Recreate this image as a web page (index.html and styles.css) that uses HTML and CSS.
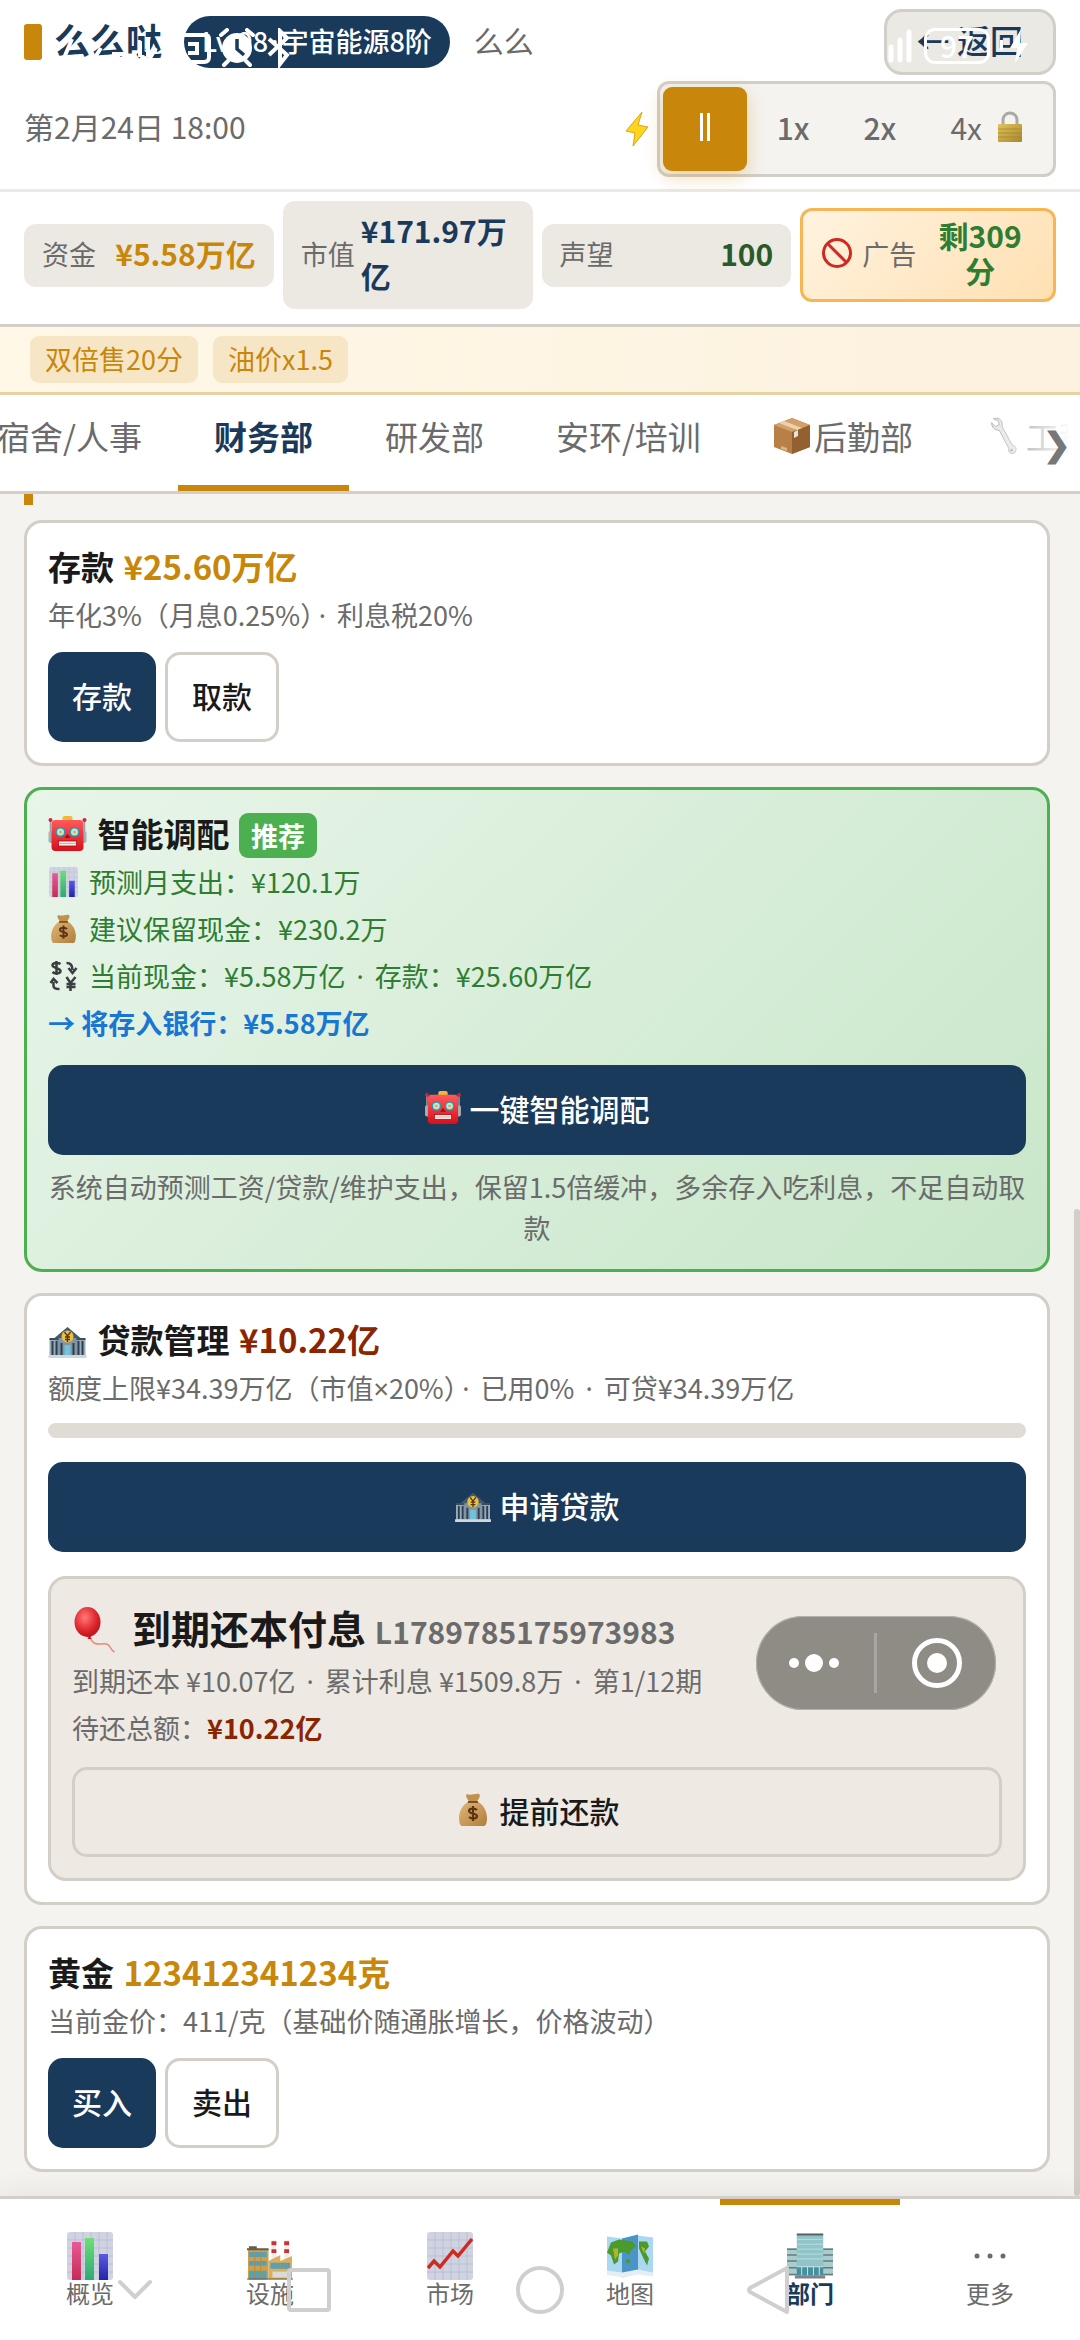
FILE: index.html
```html
<!DOCTYPE html>
<html lang="zh-CN">
<head>
<meta charset="utf-8">
<meta name="viewport" content="width=device-width, initial-scale=1">
<title>财务部</title>
<link rel="stylesheet" href="styles.css">
</head>
<body>
<svg class="sprite" aria-hidden="true">
  <defs>
    <linearGradient id="g-red" x1="0" y1="0" x2="0" y2="1"><stop offset="0" stop-color="#ff5a5a"/><stop offset="1" stop-color="#d90f1c"/></linearGradient>
    <linearGradient id="g-gold" x1="0" y1="0" x2="1" y2="1"><stop offset="0" stop-color="#e0c45a"/><stop offset="1" stop-color="#a8862c"/></linearGradient>
    <linearGradient id="g-bag" x1="0" y1="0" x2="1" y2="1"><stop offset="0" stop-color="#e3b878"/><stop offset="1" stop-color="#b07d3c"/></linearGradient>
    <linearGradient id="g-pink" x1="0" y1="0" x2="0" y2="1"><stop offset="0" stop-color="#e85a96"/><stop offset="1" stop-color="#c72a55"/></linearGradient>
    <linearGradient id="g-green" x1="0" y1="0" x2="0" y2="1"><stop offset="0" stop-color="#6de070"/><stop offset="1" stop-color="#2fa878"/></linearGradient>
    <linearGradient id="g-blue" x1="0" y1="0" x2="0" y2="1"><stop offset="0" stop-color="#5a5ae6"/><stop offset="1" stop-color="#2424a8"/></linearGradient>
    <radialGradient id="g-balloon" cx=".4" cy=".35" r=".7"><stop offset="0" stop-color="#ff7a78"/><stop offset=".6" stop-color="#e02a30"/><stop offset="1" stop-color="#b80f1a"/></radialGradient>
  </defs>
  <symbol id="i-bolt" viewBox="0 0 24 36"><path d="M17 1 1 20l9 2-2 13 15-19-10-2z" fill="#fdd41f" stroke="#d9a80c" stroke-width="1"/></symbol>
  <symbol id="i-lock" viewBox="0 0 26 32"><path d="M6 14V9a7 7 0 0 1 14 0v5" fill="none" stroke="#a9aaa8" stroke-width="3"/><rect x="1" y="13" width="24" height="18" rx="1" fill="url(#g-gold)"/><path d="M1 18h24M1 22h24M1 26h24" stroke="#9c7d28" stroke-width=".6"/></symbol>
  <symbol id="i-ban" viewBox="0 0 32 32"><g fill="none" stroke="#cf2a22" stroke-width="3"><circle cx="16" cy="16" r="13.5"/><path d="m6.5 6.500 19 19"/></g></symbol>
  <symbol id="i-box" viewBox="0 0 38 38"><path d="m19 1 18 7v22l-18 7-18-7V8z" fill="#b87f47"/><path d="m1 8 18 7 18-7-18-7z" fill="#d3a06a"/><path d="M19 15v22l18-7V8z" fill="#94602f"/><path d="m6 6 18 7 5-2-18-7z" fill="#ead2ae"/><path d="M21 15v6l4-2v-6z" fill="#e8e4dc"/><path d="m8 29 6 2v3l-6-2z" fill="#d9b58a"/></symbol>
  <symbol id="i-wrench" viewBox="0 0 28 40"><path d="M3 2c4-2 9 0 9 5 0 2 0 3 1 5l10 18c4 0 5 5 2 8-4 2-7-1-6-5L9 14C4 14 1 11 1 6l4 4 4-2-1-4z" fill="#dcdee1" stroke="#94979c" stroke-width="1"/><circle cx="22" cy="35" r="1.500" fill="#8e9196"/></symbol>
  <symbol id="i-robot" viewBox="0 0 38 36"><path d="M2 5v14M36 5v14" stroke="#9aa0a6" stroke-width="1.500"/><circle cx="2" cy="4" r="2" fill="#d9222e"/><circle cx="36" cy="4" r="2" fill="#d9222e"/><rect x="14" y="0" width="10" height="6" rx="2" fill="#f0b83a"/><rect x="0" y="15" width="5" height="12" rx="2" fill="#a8b0b8"/><rect x="33" y="15" width="5" height="12" rx="2" fill="#a8b0b8"/><rect x="3" y="4" width="32" height="31" rx="4" fill="url(#g-red)"/><circle cx="12" cy="16" r="5" fill="#2f95b4"/><circle cx="26" cy="16" r="5" fill="#2f95b4"/><circle cx="12" cy="16" r="3.500" fill="#b8ecd8"/><circle cx="26" cy="16" r="3.500" fill="#b8ecd8"/><circle cx="12" cy="16" r="1.500" fill="#e8b020"/><circle cx="26" cy="16" r="1.500" fill="#e8b020"/><path d="m19 18 3 4h-6z" fill="#a30d12"/><rect x="10" y="25" width="18" height="5" fill="#f6eee8" stroke="#a30d12" stroke-width=".8"/><path d="M10 27.500h18" stroke="#b08a88" stroke-width=".6"/></symbol>
  <symbol id="i-chart" viewBox="0 0 46 48"><rect width="46" height="48" rx="3" fill="#cfd3e2"/><path d="M0 8h46M0 16h46M0 24h46M0 32h46M0 40h46M8 0v48M16 0v48M24 0v48M32 0v48M40 0v48" stroke="#b6bcd0" stroke-width=".8"/><path d="M5 10h9v38H5z" fill="url(#g-pink)"/><path d="M18 6h9v42h-9z" fill="url(#g-green)"/><path d="M32 22h9v26h-9z" fill="url(#g-blue)"/></symbol>
  <symbol id="i-trend" viewBox="0 0 46 48"><rect width="46" height="48" rx="3" fill="#cfd3e2"/><path d="M0 8h46M0 16h46M0 24h46M0 32h46M0 40h46M8 0v48M16 0v48M24 0v48M32 0v48M40 0v48" stroke="#b6bcd0" stroke-width=".8"/><path d="m1 36 6-7 6 6 13-16 5 5L45 7" fill="none" stroke="#cf2a20" stroke-width="3.500"/></symbol>
  <symbol id="i-bag" viewBox="0 0 30 34"><path d="M9 1c3 2 9-1 12 0 2 1 0 5-2 7h-8C9 6 7 2 9 1z" fill="#c3904e"/><path d="M11 8h8c7 4 10 11 10 17 0 4-1 8-3 8H4c-2 0-3-4-3-8C1 19 4 12 11 8z" fill="url(#g-bag)"/><path d="M10 9h10" stroke="#7c5020" stroke-width="2"/><path d="M19 17c-2-2-8-2-8 1s8 2 8 5-6 3-8 1M15 13v15" fill="none" stroke="#5c3414" stroke-width="2.200"/></symbol>
  <symbol id="i-exchange" viewBox="0 0 26 30"><g fill="none" stroke="#3b3d42" stroke-width="2.500"><path d="M10 3C7 1 2 2 2 4.500S10 7 10 10s-6 3-8 1M6 0v14M16 2c5 0 6 3 6 7M18 7l4 5 4-5M3 21v4c0 2 2 3 6 3M0 22l3-4 4 4M16 16l4 6 5-6M20 22v8M16 23h9M16 26h9"/></g></symbol>
  <symbol id="i-bank" viewBox="0 0 38 36"><g transform="translate(0 5)"><path d="M1 12h9v17H1zM28 12h9v17h-9z" fill="#9aabb8"/><path d="m6 11 13-11 13 11z" fill="#45596b"/><path d="M8 11h22v18H8z" fill="#8195a4"/><path d="M1 12h9M28 12h9" stroke="#3b4d60" stroke-width="2"/><path d="M4 14v14M8 14v14M13 16v12M25 16v12M30 14v14M34 14v14" stroke="#2c3e50" stroke-width="2"/><path d="M16 18h6v11h-6z" fill="#6fc3da"/><circle cx="19" cy="9.500" r="6" fill="#f0c03c"/><path d="m16 5 3 4 3-4M19 9v6M16.500 10h5M16.500 12.500h5" fill="none" stroke="#493510" stroke-width="1.300"/><path d="M0 28h38v3H0z" fill="#cfd6dc"/></g></symbol>
  <symbol id="i-balloon" viewBox="0 0 42 46"><path d="M17 31c3 9 10 5 16 6 5 2 3 5 8 8" fill="none" stroke="#e88a78" stroke-width="1.500"/><ellipse cx="14" cy="15" rx="13" ry="15" fill="url(#g-balloon)"/><path d="m6 26 10 2 6-3-5 5 1 2h-4l1-2z" fill="#c9151f"/></symbol>
  <symbol id="i-factory" viewBox="0 0 47 48"><g transform="translate(0 8)"><path d="M25 0h5v20h-5zM38 0h5v20h-5z" fill="#f1ece4"/><path d="M25 1h5v4h-5zM25 9h5v4h-5zM38 1h5v4h-5zM38 9h5v4h-5z" fill="#c23438"/><path d="M22 21l12-6v6l12-5v24H22z" fill="#dcae5c"/><path d="M1 9h21v31H1z" fill="#cf9f4c"/><path d="M0 8h22v2H0zM2 6h8v2H2z" fill="#6b5b48"/><path d="M2 12h18v5H2zM2 21h18v5H2zM2 31h18v9H2zM24 23h20v6H24z" fill="#4fa3bd"/><path d="M8 12v28M14 12v28M29 23v6M34 23v6M39 23v6" stroke="#b98a3c" stroke-width="1"/><path d="M26 32h18v6H26z" fill="#dcdad6"/><path d="M0 39h47v1H0z" fill="#77603c"/></g></symbol>
  <symbol id="i-map" viewBox="0 0 46 43"><path d="m0 2 15 2 16-3 15 2v38l-15-2-16 3-15-2z" fill="#a9d8f0"/><path d="m15 4 16-4v39l-16 4z" fill="#4a94c8"/><path d="M0 36l15 2 16-3 15 3v4l-15-2-16 3-15-3z" fill="#e5eef0"/><path d="M4 8 12 5l14 2 3 5-4 3-3 5-5-3-5 2-1 8-4 3-3-9-4-3zM32 7l8 0 2 5-4 5 4 7-2 7-4-8-4-9zM19 25l4 0 0 4-4-1z" fill="#4a9a2e"/><path d="M6 14h5v7l-3 4zM34 12l4 2-1 5z" fill="#b4b428"/></symbol>
  <symbol id="i-office" viewBox="0 0 47 46"><path d="M0 15h47v28H0z" fill="#a9cccd"/><path d="M0 16h47M0 22h47M0 28h47M0 35h47M0 42h47" stroke="#68797e" stroke-width="1.500"/><path d="M10 1h27v33H10z" fill="#90c4c8"/><path d="M10 6h27M10 11h27M10 16h27M10 21h27M10 26h27" stroke="#b9dede"/><path d="M10 1h27" stroke="#555f64" stroke-width="2"/><path d="M10 34h27v9H10z" fill="#478f9c"/><path d="M15 34v9M21 34v9M27 34v9M33 34v9M10 34h27" stroke="#cfe3e4"/><path d="M8 43h31v3H8z" fill="#7d838c"/></symbol>
  <symbol id="i-dots" viewBox="0 0 46 46"><g fill="#6b6b6b"><circle cx="10" cy="23" r="2.500"/><circle cx="23" cy="23" r="2.500"/><circle cx="36" cy="23" r="2.500"/></g></symbol>
</svg>

<header class="header">
  <div class="brand-row">
    <span class="brand-mark"></span>
    <h1 class="brand-name">么么哒</h1>
    <span class="level">Lv.98<span class="sep">·</span>宇宙能源8阶</span>
    <span class="owner">么么</span>
    <button class="back" type="button">← 返回</button>
  </div>
  <div class="time-row">
    <time class="date">第2月24日 18:00</time>
    <svg class="bolt"><use href="#i-bolt"/></svg>
    <div class="speeds">
      <button class="speed speed-on" type="button" aria-label="暂停"><span class="pause"></span></button>
      <button class="speed" type="button">1x</button>
      <button class="speed" type="button">2x</button>
      <button class="speed speed-thin" type="button">4x <svg class="lock"><use href="#i-lock"/></svg></button>
    </div>
  </div>
</header>

<section class="stats">
  <div class="stat"><span class="stat-label">资金</span><b class="stat-value gold">¥5.58万亿</b></div>
  <div class="stat"><span class="stat-label">市值</span><b class="stat-value navy">¥171.97万亿</b></div>
  <div class="stat"><span class="stat-label">声望</span><b class="stat-value forest">100</b></div>
  <div class="stat stat-ad"><svg class="ban"><use href="#i-ban"/></svg><span class="stat-label">广告</span><b class="ad-value">剩309分</b></div>
</section>

<div class="buffs"><span class="buff">双倍售20分</span><span class="buff">油价x1.5</span></div>

<nav class="tabs">
  <div class="tab-track">
    <button class="tab" type="button">宿舍/人事</button>
    <button class="tab tab-on" type="button">财务部</button>
    <button class="tab" type="button">研发部</button>
    <button class="tab" type="button">安环/培训</button>
    <button class="tab" type="button"><svg class="tab-icon"><use href="#i-box"/></svg>后勤部</button>
    <button class="tab" type="button"><svg class="tab-icon"><use href="#i-wrench"/></svg>工程部</button>
  </div>
  <span class="tab-more">❯</span>
</nav>

<main class="content">
  <div class="section-bar"></div>

  <section class="card">
    <h2 class="title">存款 <span class="gold">¥25.60万亿</span></h2>
    <p class="line">年化3%（月息0.25%）<span class="sep">·</span> 利息税20%</p>
    <div class="actions">
      <button class="btn btn-main" type="button">存款</button>
      <button class="btn" type="button">取款</button>
    </div>
  </section>

  <section class="card card-green">
    <h2 class="title"><svg class="ico-title"><use href="#i-robot"/></svg> 智能调配 <span class="tag">推荐</span></h2>
    <ul class="facts">
      <li><svg class="ico"><use href="#i-chart"/></svg>预测月支出：¥120.1万</li>
      <li><svg class="ico"><use href="#i-bag"/></svg>建议保留现金：¥230.2万</li>
      <li><svg class="ico"><use href="#i-exchange"/></svg><span>当前现金：¥5.58万亿 <span class="sep">·</span> 存款：¥25.60万亿</span></li>
      <li class="fact-key">→ 将存入银行：¥5.58万亿</li>
    </ul>
    <button class="btn btn-main btn-wide" type="button"><svg class="ico-btn"><use href="#i-robot"/></svg>一键智能调配</button>
    <p class="note">系统自动预测工资/贷款/维护支出，保留1.5倍缓冲，多余存入吃利息，不足自动取款</p>
  </section>

  <section class="card">
    <h2 class="title"><svg class="ico-title"><use href="#i-bank"/></svg> 贷款管理 <span class="rust">¥10.22亿</span></h2>
    <p class="line">额度上限¥34.39万亿（市值<span class="times">×</span>20%）<span class="sep">·</span> 已用0% <span class="sep">·</span> 可贷¥34.39万亿</p>
    <progress class="quota" value="0" max="100" aria-label="已用额度"></progress>
    <button class="btn btn-main btn-wide" type="button"><svg class="ico-btn"><use href="#i-bank"/></svg>申请贷款</button>
    <article class="loan">
      <h3 class="loan-title"><svg class="balloon"><use href="#i-balloon"/></svg>到期还本付息 <span class="loan-id">L1789785175973983</span></h3>
      <p class="line">到期还本 ¥10.07亿 <span class="sep">·</span> 累计利息 ¥1509.8万 <span class="sep">·</span> 第1/12期</p>
      <p class="line line-next">待还总额：<b class="rust">¥10.22亿</b></p>
      <button class="btn btn-wide" type="button"><svg class="ico-btn"><use href="#i-bag"/></svg>提前还款</button>
    </article>
  </section>

  <section class="card">
    <h2 class="title">黄金 <span class="gold">123412341234克</span></h2>
    <p class="line">当前金价：411/克（基础价随通胀增长，价格波动）</p>
    <div class="actions">
      <button class="btn btn-main" type="button">买入</button>
      <button class="btn" type="button">卖出</button>
    </div>
  </section>
  <div class="scrollbar"></div>
</main>

<nav class="dock">
  <a class="dock-item" href="#"><svg class="dock-icon"><use href="#i-chart"/></svg>概览</a>
  <a class="dock-item" href="#"><svg class="dock-icon"><use href="#i-factory"/></svg>设施</a>
  <a class="dock-item" href="#"><svg class="dock-icon"><use href="#i-trend"/></svg>市场</a>
  <a class="dock-item" href="#"><svg class="dock-icon"><use href="#i-map"/></svg>地图</a>
  <a class="dock-item dock-on" href="#"><svg class="dock-icon"><use href="#i-office"/></svg>部门</a>
  <a class="dock-item" href="#"><svg class="dock-icon"><use href="#i-dots"/></svg>更多</a>
</nav>

<div class="capsule">
  <svg viewBox="0 0 240 94"><g fill="#fff"><circle cx="38" cy="47" r="5"/><circle cx="58" cy="47" r="9"/><circle cx="78" cy="47" r="5"/><circle cx="181" cy="47" r="10"/></g><path d="M119.500 17v60" stroke="#a9a6a1" stroke-width="3"/><circle cx="181" cy="47" r="22.500" fill="none" stroke="#fff" stroke-width="5"/></svg>
</div>

<div class="status" aria-hidden="true">
  <svg class="status-left" viewBox="0 0 240 40">
    <g fill="none" stroke="#fff" stroke-width="4"><path d="M8 30l8-19M36 34l9-14M56 26l14 0M84 13v16M92 12v17M100 20l-9 15"/><path d="M127 7h22q4 0 4 4v18q0 5-5 5h-21" /><path d="M132 16h9v9h-9"/></g>
    <circle cx="181" cy="20" r="15" fill="#fff"/><path d="M181 11v10l7 6" fill="none" stroke="#1a3a5c" stroke-width="3.500"/><path d="m165 7 6-5M197 7l-6-5M172 33l-4 4M190 33l4 4" stroke="#fff" stroke-width="4" stroke-linecap="round"/>
    <path d="m213 11 18 16-7 9V3l7 7-18 17" fill="none" stroke="#fff" stroke-width="4"/>
  </svg>
  <div class="status-right">
    <svg class="signal" viewBox="0 0 26 34"><path d="M3 18v13M12 11v20M21 3v28" stroke="#fff" stroke-width="5" stroke-linecap="round"/></svg>
    <span class="battery">97</span>
    <svg class="charge" viewBox="0 0 30 36"><path d="M0 12v10" stroke="#fff" stroke-width="6"/><path d="M21 1 10 20h7l-2 15 13-20h-8z" fill="#fff"/></svg>
  </div>
</div>

<div class="sysnav" aria-hidden="true">
  <svg class="sys-hide" viewBox="0 0 34 50"><path d="m2 17 15 15 15-15"/></svg>
  <svg class="sys-recent" viewBox="0 0 44 50"><rect x="2" y="5" width="40" height="40" rx="2"/></svg>
  <svg class="sys-home" viewBox="0 0 50 50"><circle cx="25" cy="25" r="22"/></svg>
  <svg class="sys-back" viewBox="0 0 44 50"><path d="M40 3v44L3 27q-2-2 0-4z"/></svg>
</div>
</body>
</html>
```

FILE: styles.css
```css
* { box-sizing: border-box; }

body {
  margin: 0;
  min-height: 100vh;
  display: flex;
  flex-direction: column;
  position: relative;
  overflow-x: hidden;
  background: #f4f3ef;
  color: #1a1a1a;
  font-family: "Noto Sans CJK SC", sans-serif;
  font-size: 27px;
  line-height: 41px;
}

h1, h2, h3, p, ul { margin: 0; padding: 0; font-weight: inherit; }
button { font-family: inherit; color: inherit; margin: 0; }
.sprite { position: absolute; width: 0; height: 0; }

.gold { color: #c8860b; }
.navy { color: #1a3a5c; }
.forest { color: #2a5a2a; }
.rust { color: #8b2500; }

/* Narrow separators between fact groups */
.sep, .times { font-family: "Noto Sans", sans-serif; line-height: 1; }
.line .sep, .facts .sep { margin: 0 5px; }
.level .sep { margin: 0 3px; }

/* Header */
.header {
  background: #fff;
  border-bottom: 3px solid #ebe9e3;
  padding: 9px 24px 12px;
  display: flex;
  flex-direction: column;
  gap: 6px;
}
.brand-row { display: flex; align-items: center; height: 66px; }
.brand-mark { width: 18px; height: 36px; border-radius: 3px; background: #c8860b; margin-right: 12px; }
.brand-name { font-size: 36px; font-weight: 700; color: #1a3a5c; margin-right: 22px; padding-bottom: 6px; }
.level {
  background: #1a3a5c;
  color: #fff;
  font-weight: 500;
  border-radius: 26px;
  padding: 4px 18px 7px;
  margin-right: 24px;
}
.owner { font-size: 30px; color: #6b6b6b; padding-bottom: 4px; }
.back {
  margin-left: auto;
  height: 66px;
  padding: 0 30px 4px;
  border: 3px solid #d3cec8;
  border-radius: 18px;
  background: #ebe9e3;
  color: #1a3a5c;
  font-size: 33px;
  font-weight: 500;
}
.time-row { display: flex; align-items: center; }
.date { font-size: 30px; color: #6b6b6b; margin-right: auto; padding-bottom: 5px; }
.bolt { width: 24px; height: 36px; margin-right: 8px; }
.speeds {
  display: flex;
  padding: 3px;
  border: 3px solid #d3cec8;
  border-radius: 12px;
  background: #f4f3ef;
}
.speed {
  min-width: 86px;
  height: 84px;
  padding: 0 27px 4px;
  border: 0;
  border-radius: 9px;
  background: none;
  color: #6b6b6b;
  font-size: 30px;
  font-weight: 500;
  display: flex;
  align-items: center;
  justify-content: center;
}
.speed-on { min-width: 84px; margin-right: 3px; background: #c8860b; box-shadow: 0 6px 18px rgba(200, 134, 11, .3); }
.speed-thin { font-weight: 400; gap: 15px; }
.pause { width: 10px; height: 28px; border: solid #fff; border-width: 0 3px; }
.lock { width: 26px; height: 32px; }

/* Stats */
.stats {
  display: flex;
  align-items: center;
  gap: 9px;
  padding: 9px 24px 15px;
  background: #fff;
  border-bottom: 3px solid #d3cec8;
}
.stat {
  flex: 1 1 0;
  display: flex;
  align-items: center;
  justify-content: space-between;
  padding: 7px 18px 11px;
  border-radius: 12px;
  background: #ece9e3;
}
.stat-label { color: #6b6b6b; white-space: nowrap; }
.stat-value { font-size: 30px; line-height: 45px; margin-left: 6px; }
.stat-ad {
  border: 3px solid #f7b555;
  background: linear-gradient(135deg, #fff3e0, #ffe0b2);
  justify-content: flex-start;
}
.ban { width: 32px; height: 32px; margin-right: 9px; flex: none; }
.ad-value { flex: 1; font-size: 30px; line-height: 35px; text-align: center; color: #2e7d32; padding-left: 9px; }

.buffs {
  display: flex;
  gap: 15px;
  padding: 9px 30px;
  background: linear-gradient(90deg, #fff8e7, #fdf1df);
  border-bottom: 3px solid #e6d3a5;
}
.buff { padding: 2px 15px 4px; border-radius: 9px; background: #f7e6c6; color: #c8860b; }

/* Tabs */
.tabs { position: relative; overflow: hidden; background: #fff; border-bottom: 3px solid #d3cec8; }
.tab-track { display: flex; margin-left: -39px; }
.tab {
  flex: none;
  display: flex;
  align-items: center;
  padding: 17px 36px 25px;
  border: 0;
  border-bottom: 6px solid transparent;
  background: none;
  color: #6b6b6b;
  font-size: 33px;
  line-height: 48px;
}
.tab-on { color: #1a3a5c; font-weight: 700; border-color: #c8860b; }
.tab-icon { width: 38px; height: 38px; margin-right: 3px; }
.tab-more {
  position: absolute;
  inset: 0 0 0 auto;
  width: 96px;
  padding: 27px 9px 0 0;
  text-align: right;
  font-size: 33px;
  font-weight: 700;
  color: #777;
  background: linear-gradient(90deg, rgba(255, 255, 255, .2), #fff 90%);
}

/* Content */
.content { position: relative; flex: 1; padding: 0 30px 24px 24px; display: flex; flex-direction: column; gap: 21px; }
.section-bar { width: 9px; height: 11px; margin-bottom: -6px; background: #c8860b; }
.card {
  padding: 21px;
  border: 3px solid #d3cec8;
  border-radius: 18px;
  background: #fff;
}
.card-green { border-color: #4caf50; background: linear-gradient(135deg, #e8f5e9, #c8e6c9); }
.title { font-size: 33px; line-height: 44px; font-weight: 700; margin-bottom: 6px; }
.title .gold, .title .rust { margin-left: 2px; }
.line { color: #6b6b6b; }
.line-next { margin-top: 6px; }
.actions { display: flex; gap: 9px; margin-top: 17px; }
.btn {
  height: 90px;
  padding: 0 24px 5px;
  border: 3px solid #d3cec8;
  border-radius: 15px;
  background: none;
  font-size: 30px;
  font-weight: 500;
  display: flex;
  align-items: center;
  justify-content: center;
}
.btn-main { border: 0; background: #1a3a5c; color: #fff; }
.btn-wide { width: 100%; }
.ico-title { width: 39px; height: 36px; vertical-align: -5px; margin-right: 3px; }
.ico-btn { width: 36px; height: 34px; margin-right: 9px; }
.tag {
  padding: 3px 12px;
  margin-left: 2px;
  border-radius: 9px;
  background: #4caf50;
  color: #fff;
  font-size: 27px;
  line-height: 27px;
}
.facts { list-style: none; color: #2e7d32; display: flex; flex-direction: column; gap: 6px; margin-bottom: 22px; }
.facts li { display: flex; align-items: center; }
.ico { width: 31px; height: 30px; margin-right: 10px; }
.facts .fact-key { color: #1976d2; font-weight: 700; }
.note { margin-top: 11px; text-align: center; color: #6b6b6b; }
.quota {
  display: block;
  appearance: none;
  width: 100%;
  height: 15px;
  margin: 15px 0 24px;
  border: 0;
  border-radius: 8px;
  overflow: hidden;
  background: #e0dcd5;
}
.quota::-webkit-progress-bar { background: #e0dcd5; }
.loan { margin-top: 24px; padding: 21px; border: 3px solid #d3cec8; border-radius: 18px; background: #eee9e3; }
.loan .btn { margin-top: 19px; }
.loan-title { font-size: 39px; line-height: 54px; font-weight: 700; margin-bottom: 6px; }
.balloon { width: 45px; height: 46px; vertical-align: -9px; margin-right: 15px; }
.loan-id { font-size: 30px; line-height: 30px; color: #6b6b6b; }
.scrollbar { position: absolute; right: 0; bottom: 0; width: 6px; height: 58%; border-radius: 3px; background: #d3cec8; }

/* Bottom navigation */
.dock {
  position: relative;
  display: flex;
  height: 144px;
  background: #fff;
  border-top: 3px solid #d3cec8;
  box-shadow: 0 -6px 24px rgba(0, 0, 0, .06);
}
.dock-item {
  flex: 1;
  padding-top: 27px;
  border-top: 6px solid transparent;
  display: flex;
  flex-direction: column;
  align-items: center;
  color: #6b6b6b;
  font-size: 24px;
  line-height: 25px;
  text-decoration: none;
}
.dock-on { border-color: #c8860b; color: #1a3a5c; font-weight: 700; }
.dock-icon { width: 46px; height: 48px; }

/* Floating layers */
.capsule {
  position: absolute;
  right: 84px;
  top: 1616px;
  width: 240px;
  height: 94px;
  border-radius: 47px;
  background: #8f8c86;
  box-shadow: inset 0 0 0 1px #b5b2ad;
}
.capsule svg { display: block; }
.status {
  position: absolute;
  inset: 0 0 auto 0;
  padding: 28px 50px 0 56px;
  display: flex;
  justify-content: space-between;
  pointer-events: none;
}
.status-left { width: 240px; height: 40px; }
.status-right { display: flex; align-items: flex-start; gap: 10px; }
.signal { width: 26px; height: 36px; }
.battery {
  width: 66px;
  height: 36px;
  border: 3px solid #fff;
  border-radius: 11px;
  color: #fff;
  font-size: 30px;
  line-height: 28px;
  font-weight: 500;
  text-align: center;
}
.charge { width: 30px; height: 36px; }
.sysnav {
  position: absolute;
  inset: auto 0 25px 0;
  padding-left: 118px;
  display: flex;
  pointer-events: none;
}
.sysnav svg { height: 50px; fill: none; stroke: #cfcfcf; stroke-width: 4px; stroke-linecap: round; stroke-linejoin: round; }
.sys-hide { width: 34px; }
.sys-recent { width: 44px; margin-left: 135px; }
.sys-home { width: 50px; margin-left: 184px; }
.sys-back { width: 44px; margin-left: 182px; }
```
